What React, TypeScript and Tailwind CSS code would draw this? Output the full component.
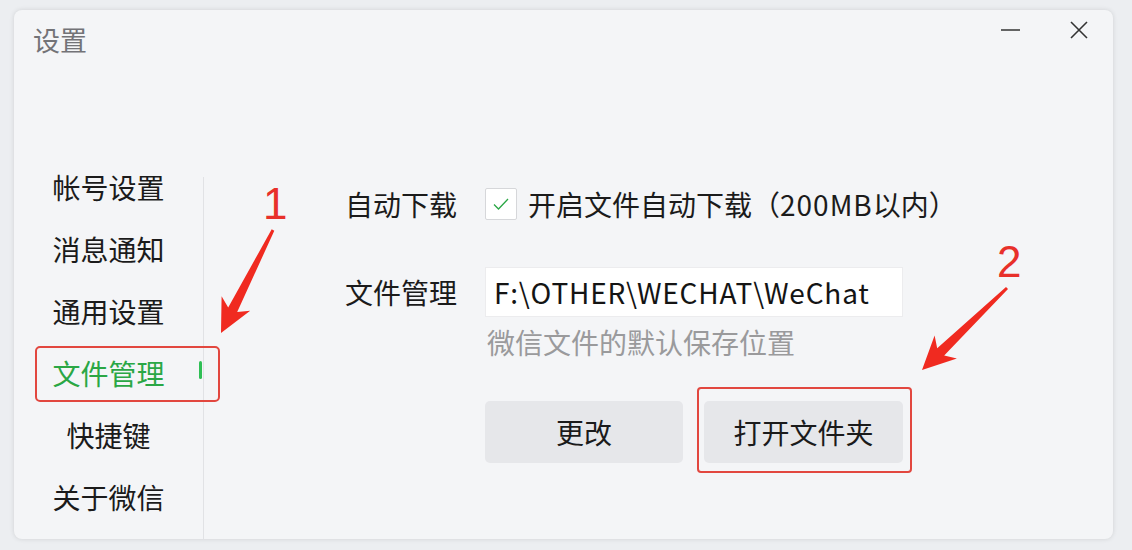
import React from 'react';

const cjk = { fontFamily: '"Noto Sans CJK SC", "Noto Sans", sans-serif' };

const menu = ['帐号设置', '消息通知', '通用设置', '文件管理', '快捷键', '关于微信'];

function Sidebar() {
  return (
    <div className="flex w-[190px] shrink-0">
      <div className="flex w-[189px] flex-col">
        {menu.map((item) => {
          const active = item === '文件管理';
          return (
            <div
              key={item}
              className={
                'relative flex h-[62px] items-center justify-center text-[28px] ' +
                (active ? 'text-[#2aa745]' : 'text-[#1b1b1b]')
              }
            >
              {item}
              {active && <span className="absolute right-[1px] top-[19px] h-[18px] w-[3px] rounded-sm bg-[#2fbf55]" />}
            </div>
          );
        })}
      </div>
      <div className="mt-[21px] w-px self-stretch bg-[#e1e2e5]" />
    </div>
  );
}

function Content() {
  return (
    <div className="flex flex-col pl-[141px] pt-[32px] text-[28px] text-[#1b1b1b]">
      {/* auto download */}
      <div className="flex h-[32px] items-center">
        <span className="w-[140px] shrink-0">自动下载</span>
        <span className="flex h-[32px] w-[32px] items-center justify-center rounded-[2px] border border-[#d6d7da] bg-white">
          <svg width="18" height="14" viewBox="0 0 18 14" fill="none">
            <path d="M2 7.5 L6.5 12 L16 2" stroke="#2aa745" strokeWidth="1.3" />
          </svg>
        </span>
        <span className="ml-[11px] whitespace-nowrap">
          开启文件自动下载（<span className="tracking-[1px]">200MB</span>以内）
        </span>
      </div>

      {/* file path */}
      <div className="mt-[47px] flex items-center">
        <span className="w-[140px] shrink-0">文件管理</span>
        <div className="flex h-[50px] w-[418px] items-center border border-[#ececee] bg-white pl-[8px] text-[28px] tracking-[0.8px] text-[#141414]">
          F:\OTHER\WECHAT\WeChat
        </div>
      </div>
      <div className="ml-[142px] mt-[7px] text-[28px] leading-[36px] text-[#9a9a9c]">微信文件的默认保存位置</div>

      <div className="ml-[140px] mt-[41px] flex gap-[21px]">
        <button className="h-[62px] w-[198px] rounded-[5px] bg-[#e6e7ea] text-[28px] text-[#1b1b1b]">更改</button>
        <button className="h-[62px] w-[199px] rounded-[5px] bg-[#e6e7ea] text-[28px] text-[#1b1b1b]">打开文件夹</button>
      </div>
    </div>
  );
}

export default function App() {
  return (
    <div className="relative h-[550px] w-[1132px] overflow-hidden bg-[#eceef1] pl-[14px] pt-[10px]" style={cjk}>
      <div className="flex h-[529px] w-[1099px] flex-col rounded-[8px] bg-[#f4f5f7] shadow-[0_0_5px_rgba(0,0,0,0.12)]">
        {/* title bar */}
        <div className="flex h-[146px] shrink-0 items-start justify-between">
          <div className="pl-[19px] pt-[10px] text-[27px] leading-[40px] text-[#737377]">设置</div>
          <div className="flex items-center gap-[49px] pr-[25px] pt-[10px]">
            <svg width="20" height="20" viewBox="0 0 20 20">
              <path d="M0 10 H19" stroke="#333" strokeWidth="1.5" />
            </svg>
            <svg width="18" height="18" viewBox="0 0 18 18">
              <path d="M1 1 L17 17 M17 1 L1 17" stroke="#333" strokeWidth="1.6" />
            </svg>
          </div>
        </div>
        <div className="flex flex-1">
          <Sidebar />
          <Content />
        </div>
      </div>

      {/* annotations */}
      <div className="absolute left-[35px] top-[346px] h-[56px] w-[185px] rounded-[5px] border-2 border-[#e2473f]" />
      <div className="absolute left-[697px] top-[387px] h-[86px] w-[215px] rounded-[4px] border-2 border-[#e2473f]" />
      <div
        className="absolute left-[263px] top-[178px] text-[44px] leading-[52px] text-[#e8302a]"
        style={{ fontFamily: '"Liberation Sans", Arial, sans-serif' }}
      >
        1
      </div>
      <div
        className="absolute left-[997px] top-[236px] text-[44px] leading-[52px] text-[#e8302a]"
        style={{ fontFamily: '"Liberation Sans", Arial, sans-serif' }}
      >
        2
      </div>
      <svg className="pointer-events-none absolute left-0 top-0" width="1132" height="550">
        <polygon
          points="274.3,230.7 237.2,312.1 250.2,310.7 221,333 221.6,296.3 228.2,307.5 271.7,229.3"
          fill="#f02a20"
        />
        <polygon
          points="1008,289 944.2,355.5 956.9,358.6 922,370 934.6,335.6 937.2,348.3 1006,287"
          fill="#f02a20"
        />
      </svg>
    </div>
  );
}
